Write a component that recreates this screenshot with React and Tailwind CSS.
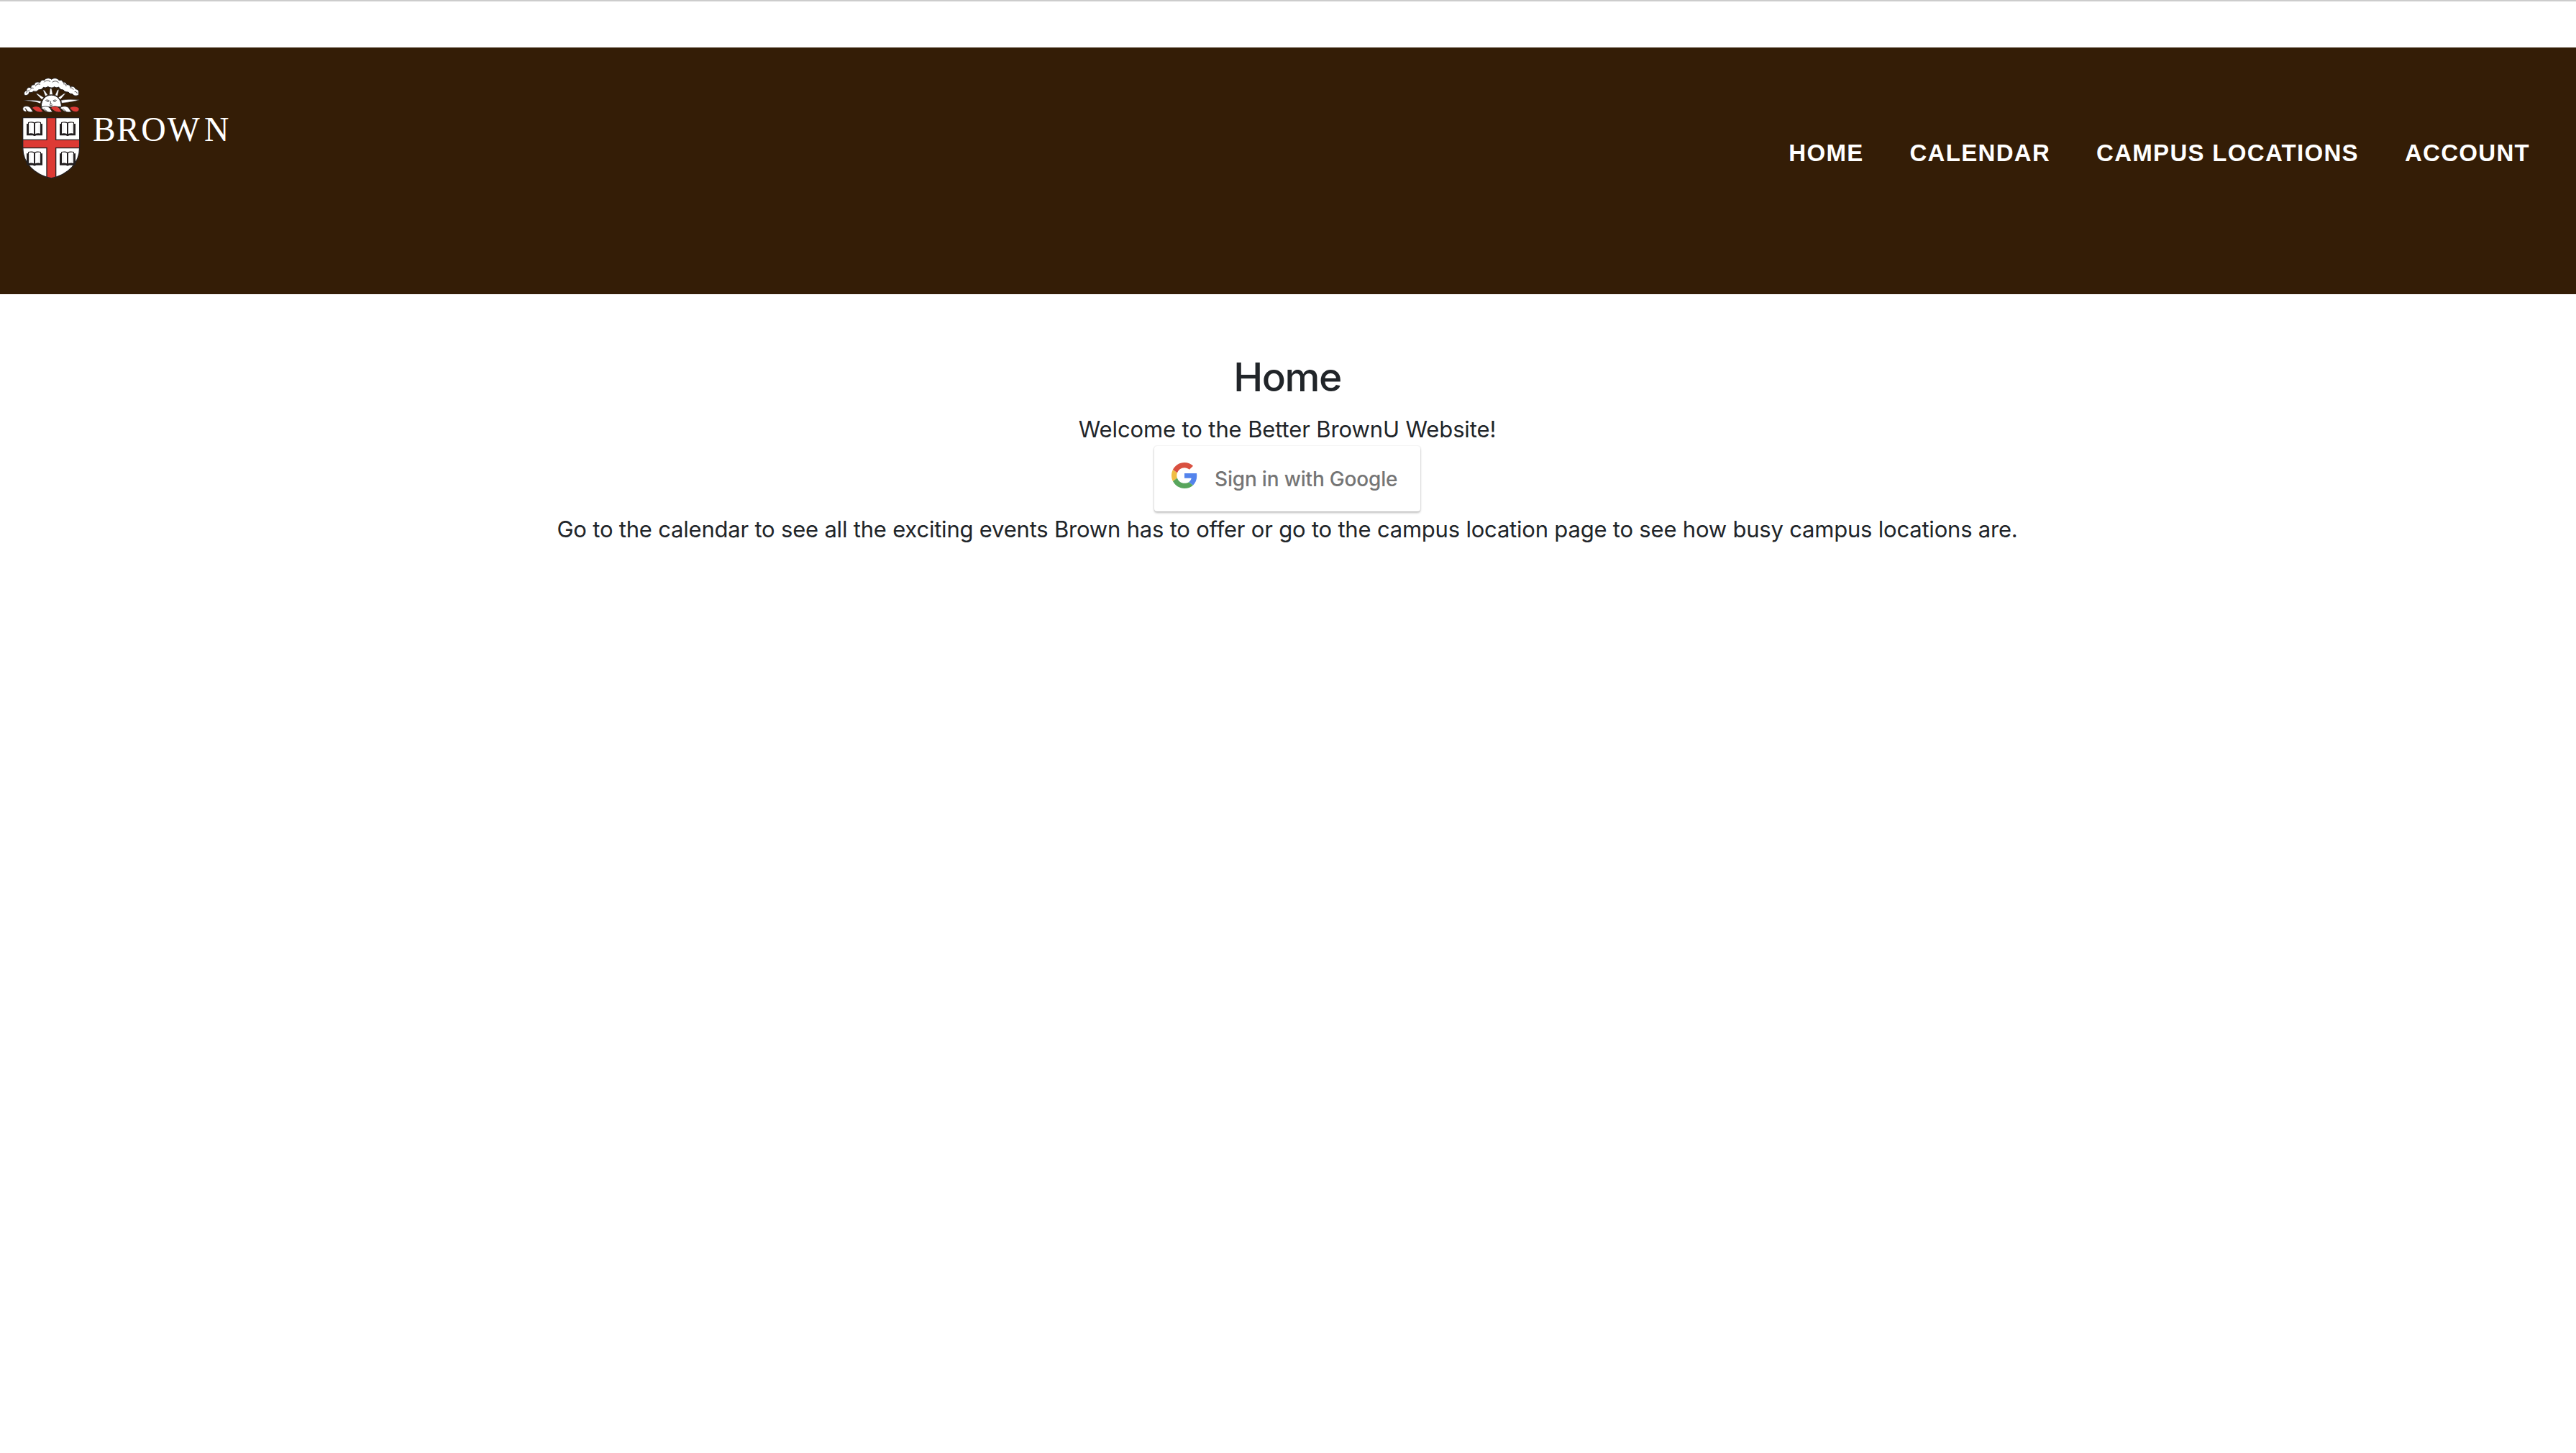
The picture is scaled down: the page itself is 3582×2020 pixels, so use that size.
const navItems = ['Home', 'Calendar', 'Campus Locations', 'Account'];

function Book({ x, y }) {
  return (
    <g transform={`translate(${x} ${y})`}>
      <path d="M0 8h6v-6c9-3 20-3 27 1c7-4 18-4 27-1v6h6v49h-27c-1 3-11 3-12 0h-27z" fill="#231f20" />
      <path d="M9 5c8-2 15-2 21 1v44c-6-3-13-3-21-1z" fill="#fff" />
      <path d="M57 5c-8-2-15-2-21 1v44c6-3 13-3 21-1z" fill="#fff" />
      <path d="M14 10v34M52 10v34" stroke="#bbb" strokeWidth="1.5" />
    </g>
  );
}

function Twist({ x, color }) {
  return (
    <path
      d={`M${x} 211c3-8 22-10 32-4c7 4 8 14 15 18c-6 5-21 3-29-1c-7-3-10-9-18-13z`}
      fill={color}
      stroke="#231f20"
      strokeWidth="2.5"
    />
  );
}

function BrownLogo() {
  return (
    <svg className="block h-[200px] w-[360px]" viewBox="0 0 1080 600" role="img" aria-label="Brown">
      {/* cloud arc */}
      <path
        d="M103 157c-6-8 0-18 8-19c-2-10 10-17 18-12c-1-9 7-14 14-12c1-11 13-15 24-10c3-9 10-12 17-9c6-10 22-12 31-4c9-8 26-6 31 4c8-3 15 1 17 8c8-2 14 2 16 10c8-1 13 3 14 9c9-5 20 1 22 9c9 1 15 8 13 15c3 5-1 13-7 13c-8 2-15-1-19-7c-8 0-14-3-17-8c-8 1-17-2-21-9c-9 0-17-5-19-12c-7 4-14 3-18-1c-7 5-18 6-27-1c-6 5-12 6-19 3c-4 8-11 11-20 10c-5 7-13 10-21 6c-4 6-11 7-17 4c-2 9-10 16-20 13z"
        fill="#fff"
        stroke="#231f20"
        strokeWidth="3"
      />
      <path
        d="M111 148c-1-6 6-12 13-9M127 133c2-5 8-8 13-5M148 120c2-8 12-12 20-8M184 103c6-8 18-9 26-2M218 103c9-7 21-6 27 3M264 110c8-1 12 3 12 10M291 126c8-2 14 3 15 8M311 143c7-2 10 2 11 7"
        fill="none"
        stroke="#231f20"
        strokeWidth="2.5"
      />
      {/* rays */}
      <g fill="#fff" stroke="#231f20" strokeWidth="1.5">
        <path d="M209 129h6l5 26h-14z" />
        <path d="M179 134l7 3l13 19l-10 5z" />
        <path d="M246 133l-7 3l-9 21l10 4z" />
        <path d="M150 150l7 1l26 16l-9 8z" />
        <path d="M274 149l-8 2l-23 16l9 8z" />
        <path d="M99 178c25 0 50-1 73 4l-4 10c-22-10-45-9-69-14z" />
        <path d="M332 176c-25-1-50-3-77 2l2 12c24-3 50-6 75-14z" />
      </g>
      {/* sun */}
      <path d="M172 206c-2-66 86-66 84 0z" fill="#fff" stroke="#231f20" strokeWidth="3" />
      <path
        d="M190 179c5-3 11-2 16 1M221 180c5-3 10-4 15-1M194 184h11M223 184h10M212 182l-2 11h6M206 197c4 3 11 3 14 0"
        fill="none"
        stroke="#231f20"
        strokeWidth="2.5"
      />
      {/* torse */}
      <path
        d="M111 225c-13 3-19-9-14-18c7-6 20-5 26-1c7 4 8 14 15 18c-6 5-16 4-22 0c-6-4-6-11-12-12"
        fill="#fff"
        stroke="#231f20"
        strokeWidth="2.5"
      />
      <Twist x={133} color="#dd3a34" />
      <Twist x={172} color="#fff" />
      <Twist x={211} color="#dd3a34" />
      <Twist x={251} color="#fff" />
      <path d="M182 214c8 1 8 8 15 11M261 214c8 1 8 8 15 11" fill="none" stroke="#231f20" strokeWidth="2.5" />
      <path d="M290 210c10-8 33-8 40 2c1 12-9 17-23 13c-9-3-10-10-17-15z" fill="#dd3a34" stroke="#231f20" strokeWidth="2" />
      {/* shield */}
      <path d="M95 251h237v124c0 66-47 113-118 129c-72-16-119-63-119-129z" fill="#fff" />
      <path d="M195 251h38v92h99v34h-99v121l-19 6l-19-6v-121h-100v-34h100z" fill="#dd3a34" />
      <path d="M195 251v92h-100M233 251v92h99M95 377h100v121M332 377h-99v121" fill="none" stroke="#231f20" strokeWidth="4" />
      <Book x={111} y={268} />
      <Book x={249} y={268} />
      <Book x={111} y={392} />
      <Book x={249} y={392} />
      <path d="M95 251h237v124c0 66-47 113-118 129c-72-16-119-63-119-129z" fill="none" stroke="#231f20" strokeWidth="4" />
      <text x="387 486 589 698 852" y="347" fill="#fff" fontSize="143" className="font-['Liberation_Serif',serif]">
        BROWN
      </text>
    </svg>
  );
}

function GoogleIcon() {
  return (
    <svg className="block size-9" viewBox="0 0 48 48" aria-hidden="true">
      <path fill="#d95040" d="M24 9.5c3.54 0 6.71 1.22 9.21 3.6l6.85-6.85C35.9 2.38 30.47 0 24 0 14.62 0 6.51 5.38 2.56 13.22l7.98 6.19C12.43 13.72 17.74 9.5 24 9.5z" />
      <path fill="#5383ec" d="M46.98 24.55c0-1.57-.15-3.09-.38-4.55H24v9.02h12.94c-.58 2.96-2.26 5.48-4.78 7.18l7.73 6c4.51-4.18 7.09-10.36 7.09-17.65z" />
      <path fill="#f0bd42" d="M10.53 28.59c-.48-1.45-.76-2.99-.76-4.59s.27-3.14.76-4.59l-7.98-6.19C.92 16.46 0 20.12 0 24c0 3.88.92 7.54 2.56 10.78l7.97-6.19z" />
      <path fill="#58a55c" d="M24 48c6.48 0 11.93-2.13 15.89-5.81l-7.73-6c-2.15 1.45-4.92 2.3-8.16 2.3-6.26 0-11.57-4.22-13.47-9.91l-7.98 6.19C6.51 42.62 14.62 48 24 48z" />
    </svg>
  );
}

export default function App() {
  return (
    <div className="min-h-screen border-t-2 border-[#cccccc] bg-white pt-16 font-['Inter',sans-serif] text-[#212529]">
      <header className="flex h-[343px] items-start justify-between bg-[#341d06] pt-[14px] pr-16">
        <BrownLogo />
        <nav className="mt-[109px] flex gap-16 font-['Liberation_Sans',sans-serif] text-[33px] leading-[48px] font-bold tracking-[1.3px] text-white uppercase">
          {navItems.map((item) => (
            <a key={item} href="#">
              {item}
            </a>
          ))}
        </nav>
      </header>
      <main className="flex flex-col items-center pt-[82px] pr-[2px]">
        <h2 className="text-[55px] leading-[66px] font-medium tracking-[-1.4px]">Home</h2>
        <p className="mt-4 -mb-px text-[31px] leading-[48px] tracking-[-0.12px]">Welcome to the Better BrownU Website!</p>
        <button className="flex h-[91px] w-[370px] items-start rounded-[4px] bg-white pt-[23px] pl-6 shadow-[0_2px_3px_0_rgba(0,0,0,0.26),0_0_2px_0_rgba(0,0,0,0.14)]">
          <GoogleIcon />
          <span className="mt-[3px] ml-6 text-[28px] leading-[40px] font-medium tracking-[-0.19px] whitespace-nowrap text-[#757575]">
            Sign in with Google
          </span>
        </button>
        <p className="mt-px text-[31px] leading-[48px] tracking-[-0.205px]">
          Go to the calendar to see all the exciting events Brown has to offer or go to the campus location page to see how busy campus locations are.
        </p>
      </main>
    </div>
  );
}
